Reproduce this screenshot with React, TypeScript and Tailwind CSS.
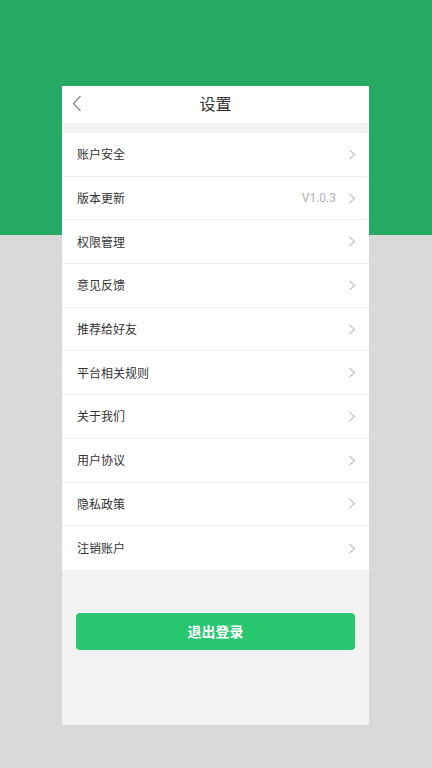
const items: { label: string; value?: string }[] = [
  { label: '账户安全' },
  { label: '版本更新', value: 'V1.0.3' },
  { label: '权限管理' },
  { label: '意见反馈' },
  { label: '推荐给好友' },
  { label: '平台相关规则' },
  { label: '关于我们' },
  { label: '用户协议' },
  { label: '隐私政策' },
  { label: '注销账户' },
];

function Chevron() {
  return (
    <svg className="w-[8px] h-[11px]" viewBox="0 0 8 11" fill="none" stroke="#c4c4c4" strokeWidth="1.2">
      <path d="M1.5 1L6.5 5.5L1.5 10" />
    </svg>
  );
}

export default function App() {
  return (
    <div
      className="min-h-[768px] w-full flex pl-[62px] pt-[86px] pb-[43px] bg-[linear-gradient(to_bottom,#25a963_235px,#d9d9d9_235px)]"
      style={{ fontFamily: '"Noto Sans CJK SC", "Noto Sans", sans-serif' }}
    >
      <div className="w-[307px] h-[639px] bg-[#f2f2f2] flex flex-col">
        <div className="relative h-[37px] bg-white flex items-center justify-center pb-[3px]">
          <button className="absolute left-[10px] top-[9px]">
            <svg className="w-[10px] h-[17px]" viewBox="0 0 10 17" fill="none" stroke="#888" strokeWidth="1.3">
              <path d="M8.5 1L1.5 8.5L8.5 16" />
            </svg>
          </button>
          <h1 className="text-[16px] text-[#333]">设置</h1>
        </div>

        <div className="mt-[10px] bg-white">
          {items.map((item, i) => (
            <div
              key={item.label}
              className={`h-[43.7px] flex items-center pl-[15px] pr-[13px] ${i < items.length - 1 ? 'border-b border-[#efefef]' : ''}`}
            >
              <span className="flex-1 text-[12px] text-[#333]">{item.label}</span>
              {item.value && (
                <span className="mr-[12px] text-[12px] text-[#b0b0b0]" style={{ fontFamily: 'Roboto, "Liberation Sans", sans-serif' }}>
                  {item.value}
                </span>
              )}
              <Chevron />
            </div>
          ))}
        </div>

        <div className="px-[14px] pt-[43px]">
          <button className="w-full h-[37px] rounded-[4px] bg-[#27c66f] text-white text-[14px] font-bold">
            退出登录
          </button>
        </div>
      </div>
    </div>
  );
}
